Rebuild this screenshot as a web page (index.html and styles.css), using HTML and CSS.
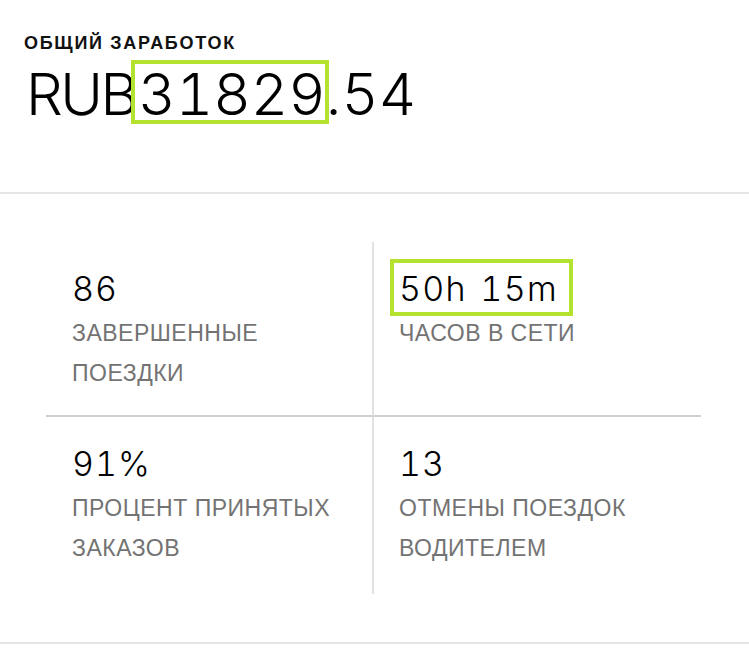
FILE: index.html
```html
<!DOCTYPE html>
<html lang="ru">
<head>
<meta charset="utf-8">
<link rel="stylesheet" href="styles.css">
</head>
<body>
<header class="summary">
  <div class="summary-title">ОБЩИЙ ЗАРАБОТОК</div>
  <div class="summary-amount"><span class="currency">RU</span>B<span class="hl hl-amount">31829</span>.54</div>
</header>
<section class="stats">
  <div class="cell cell-top cell-left">
    <div class="stat-value">86</div>
    <div class="stat-label">ЗАВЕРШЕННЫЕ<br>ПОЕЗДКИ</div>
  </div>
  <div class="cell cell-top cell-right">
    <div class="stat-value"><span class="hl hl-hours">50h 15m</span></div>
    <div class="stat-label">ЧАСОВ В СЕТИ</div>
  </div>
  <div class="cell cell-bottom cell-left">
    <div class="stat-value">91%</div>
    <div class="stat-label">ПРОЦЕНТ ПРИНЯТЫХ<br>ЗАКАЗОВ</div>
  </div>
  <div class="cell cell-bottom cell-right">
    <div class="stat-value">13</div>
    <div class="stat-label">ОТМЕНЫ ПОЕЗДОК<br>ВОДИТЕЛЕМ</div>
  </div>
</section>
<div class="end-rule"></div>
</body>
</html>
```
FILE: styles.css
```css
html, body {
  margin: 0;
  padding: 0;
  background: #ffffff;
}

body {
  width: 749px;
  font-family: "Liberation Sans", Arial, sans-serif;
  color: #000;
}

.summary {
  padding: 33px 0 63px 24px;
  border-bottom: 2px solid #e6e6e6;
}

.summary-title {
  font-family: "Liberation Sans", Arial, sans-serif;
  font-weight: 700;
  font-size: 18px;
  line-height: 20px;
  letter-spacing: 1.7px;
  color: #111;
}

.summary-amount {
  margin-top: 6px;
  font-family: Inter, "Noto Sans", sans-serif;
  font-weight: 300;
  font-size: 58px;
  line-height: 70px;
  letter-spacing: 0;
  font-variant-numeric: tabular-nums;
  padding-left: 2px;
  white-space: nowrap;
}

.currency {
  letter-spacing: -2.5px;
}

.hl {
  position: relative;
}

.hl::after {
  content: "";
  position: absolute;
  border: 4px solid #b5e22e;
  box-sizing: border-box;
}

.hl-amount::after {
  left: -7px;
  right: -3px;
  top: 1px;
  bottom: 5px;
}

.hl-hours::after {
  left: -9px;
  right: -15px;
  top: -9px;
  bottom: -7px;
}

.stats {
  display: grid;
  grid-template-columns: 328px 1fr;
  margin: 48px 48px 48px 46px;
}

.cell-left {
  border-right: 2px solid #e2e2e2;
  padding-left: 26px;
}

.cell-right {
  padding-left: 25px;
}

.cell-top {
  padding-top: 25px;
  padding-bottom: 22px;
  border-bottom: 2px solid #cfcfcf;
}

.cell-bottom {
  padding-top: 25px;
  padding-bottom: 26px;
}

.stat-value {
  font-family: Inter, "Noto Sans", sans-serif;
  font-weight: 300;
  font-size: 34px;
  line-height: 44px;
  letter-spacing: 1px;
  font-variant-numeric: tabular-nums;
  color: #000;
  white-space: nowrap;
}

.hl-hours {
  letter-spacing: 1.3px;
  word-spacing: 3px;
}

.stat-label {
  margin-top: 2px;
  font-family: "Liberation Sans", Arial, sans-serif;
  font-size: 23px;
  line-height: 40px;
  letter-spacing: 0.5px;
  color: #737373;
}

.end-rule {
  border-top: 2px solid #e6e6e6;
}
```
